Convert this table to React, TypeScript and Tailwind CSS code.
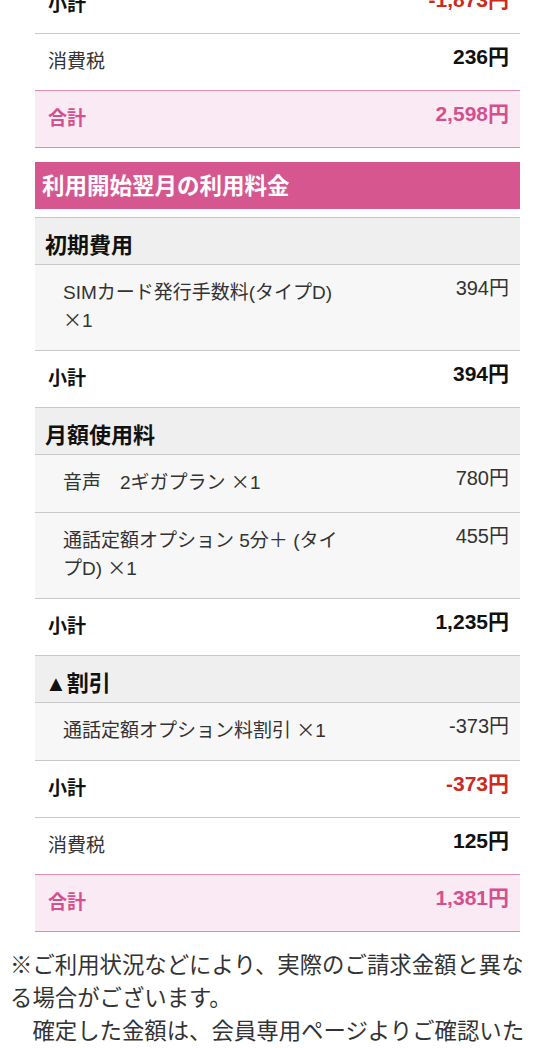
import type { ReactNode } from "react";

const FONT = { fontFamily: '"Liberation Sans", "Noto Sans CJK JP", sans-serif' };

type Line = { label: ReactNode; amount: string };

// the times sign is drawn wider in the original than Liberation's glyph
function Times() {
  return (
    <span className="leading-[0]" style={{ fontFamily: '"Noto Sans CJK JP", sans-serif' }}>
      ×
    </span>
  );
}

function ItemRow({ label, amount }: Line) {
  return (
    <div className="flex border-t border-[#c9c9c9] bg-[#f7f7f7]">
      <div className="w-[310px] shrink-0 pb-[15px] pl-[28px] pt-[14px] text-[19px] leading-[28px] text-[#333]">
        {label}
      </div>
      <div className="flex-1 pr-[11px] pt-[9px] text-right text-[20px] leading-[28px] text-[#333]">{amount}</div>
    </div>
  );
}

function SumRow({
  label,
  amount,
  bold = true,
  amountClass = "text-[#111]",
}: {
  label: string;
  amount: string;
  bold?: boolean;
  amountClass?: string;
}) {
  return (
    <div className="flex border-t border-[#c9c9c9] bg-white">
      <div
        className={`w-[310px] shrink-0 py-[14px] pl-[13px] text-[19px] leading-[28px] ${
          bold ? "font-bold text-[#111]" : "text-[#333]"
        }`}
      >
        {label}
      </div>
      <div className={`flex-1 pr-[11px] pt-[9px] text-right text-[21px] font-bold leading-[28px] ${amountClass}`}>
        {amount}
      </div>
    </div>
  );
}

function TotalRow({ amount }: { amount: string }) {
  return (
    <div className="flex border-y border-[#e08bb4] bg-[#f9eaf3]">
      <div className="w-[310px] shrink-0 py-[14px] pl-[13px] text-[19px] font-bold leading-[28px] text-[#d4508d]">合計</div>
      <div className="flex-1 pr-[11px] pt-[9px] text-right text-[21px] font-bold leading-[28px] text-[#d4508d]">
        {amount}
      </div>
    </div>
  );
}

function GroupHead({ children }: { children: ReactNode }) {
  return (
    <div className="h-[47px] border-t border-[#c9c9c9] bg-[#efefef] pl-[10px] pt-[14px] text-[22px] font-bold leading-[28px] text-[#111]">
      {children}
    </div>
  );
}

export default function App() {
  return (
    <div className="min-h-[1048px] w-[555px] overflow-hidden bg-white" style={FONT}>
      <div className="mx-[35px] -mt-[24px]">
        <SumRow label="小計" amount="-1,873円" amountClass="text-[#cc2a1e]" />
        <SumRow label="消費税" amount="236円" bold={false} />
        <TotalRow amount="2,598円" />
      </div>

      <div className="mx-[35px] mt-[14px]">
        <div className="h-[47px] bg-[#d6568f] pl-[7px] pt-[10px] text-[22.5px] font-bold leading-[30px] text-white">
          利用開始翌月の利用料金
        </div>

        <div className="mt-[8px]">
          <GroupHead>初期費用</GroupHead>
          <ItemRow
            label={
              <>
                SIMカード発行手数料(タイプD) <Times />1
              </>
            }
            amount="394円"
          />
          <SumRow label="小計" amount="394円" />

          <GroupHead>月額使用料</GroupHead>
          <ItemRow
            label={
              <>
                {"音声\u30002ギガプラン "}
                <Times />1
              </>
            }
            amount="780円"
          />
          <ItemRow
            label={
              <>
                通話定額オプション 5分＋ (タイプD) <Times />1
              </>
            }
            amount="455円"
          />
          <SumRow label="小計" amount="1,235円" />

          <GroupHead>▲割引</GroupHead>
          <ItemRow
            label={
              <>
                通話定額オプション料割引 <Times />1
              </>
            }
            amount="-373円"
          />
          <SumRow label="小計" amount="-373円" amountClass="text-[#cc2a1e]" />
          <SumRow label="消費税" amount="125円" bold={false} />
          <TotalRow amount="1,381円" />
        </div>
      </div>

      <p className="mt-[17px] px-[10px] text-[22.4px] leading-[33px] text-[#333]">
        ※ご利用状況などにより、実際のご請求金額と異なる場合がございます。
        <br />
        {"\u3000確定した金額は、会員専用ページよりご確認いただけます。"}
      </p>
    </div>
  );
}
